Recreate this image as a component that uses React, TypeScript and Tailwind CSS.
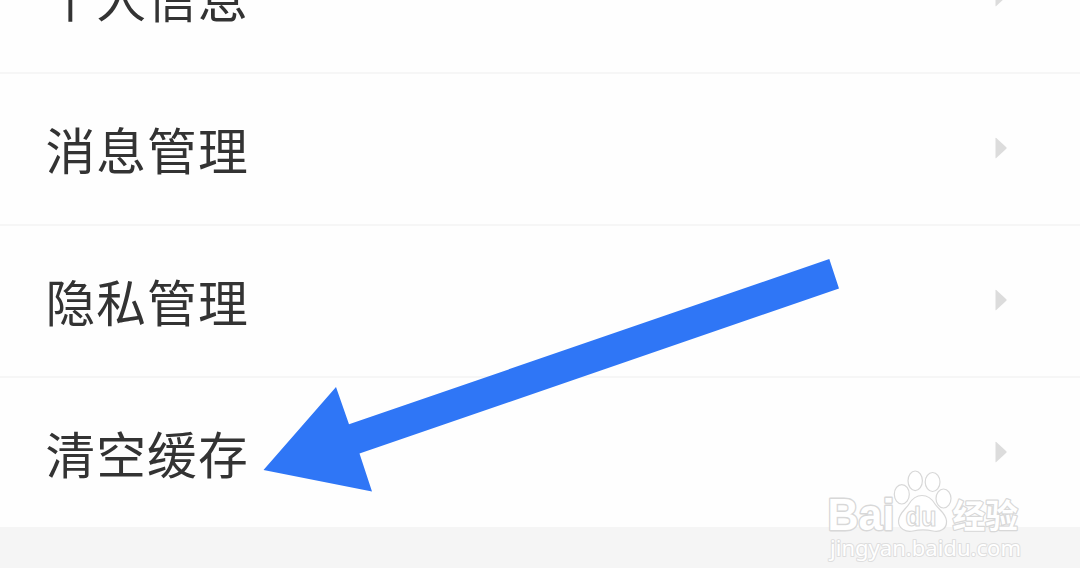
const items = ["个人信息", "消息管理", "隐私管理", "清空缓存"];

function Caret() {
  return (
    <svg viewBox="0 0 12 22" className="mb-0.5 h-[22px] w-3 fill-[#dcdcdc]">
      <path d="M0.5 1.2 Q0.5 0.3 1.3 1 L11.3 10.3 Q12 11 11.3 11.7 L1.3 21 Q0.5 21.7 0.5 20.8 Z" />
    </svg>
  );
}

function Row({ label }: { label: string }) {
  return (
    <li className="flex h-[152px] items-center justify-between border-b-2 border-[#f6f6f6] pr-[73px] pl-[45.5px] last:border-transparent">
      <span className="mb-[3px] text-[49.8px] leading-[72px] tracking-[1px] text-[#333]">{label}</span>
      <Caret />
    </li>
  );
}

function Arrow() {
  return (
    <svg viewBox="0 0 1080 586" className="pointer-events-none absolute inset-0 h-[586px] w-[1080px]">
      <path d="M263.5 470 L336 387 L349 424.3 L829.3 259 L839 288.5 L359.5 453.5 L372 491.5 Z" fill="#2f76f6" />
    </svg>
  );
}

function Watermark() {
  return (
    <svg
      viewBox="0 0 230 126"
      className="pointer-events-none absolute top-[460px] left-[810px] h-[126px] w-[230px]"
      fill="#fff"
      stroke="#d8d8d8"
      strokeLinejoin="round"
    >
      <text
        x="17.5"
        y="70"
        fontSize="44"
        fontWeight="700"
        fontFamily="Liberation Sans, sans-serif"
        textLength="67"
        lengthAdjust="spacingAndGlyphs"
        strokeWidth="2.8"
        paintOrder="stroke"
      >
        Bai
      </text>
      <g strokeWidth="1.2">
        <ellipse cx="91.8" cy="34.3" rx="7.5" ry="9.7" />
        <ellipse cx="105.2" cy="20.8" rx="7.2" ry="9.8" />
        <ellipse cx="122.6" cy="22" rx="7.4" ry="9.5" />
        <ellipse cx="133.5" cy="38.5" rx="7.5" ry="9.5" />
        <path d="M112 35.5 C118 35.5 122 39 125 44 C128 49 136 53 136.5 61 C137 69 130 72.5 123 71 C116 69.5 110 69.5 103 71 C96 72.5 88.5 69 88.5 61 C89 53 96 49 99 44 C102 39 106 35.5 112 35.5 Z" />
      </g>
      <text
        x="95.5"
        y="65.5"
        fontSize="27"
        fontWeight="700"
        fontFamily="Liberation Sans, sans-serif"
        textLength="31"
        lengthAdjust="spacingAndGlyphs"
        strokeWidth="1.2"
      >
        du
      </text>
      <text
        x="142.5"
        y="67.5"
        fontSize="33"
        fontWeight="700"
        fontFamily="Noto Sans CJK SC, sans-serif"
        textLength="65.5"
        lengthAdjust="spacingAndGlyphs"
        strokeWidth="2.4"
        paintOrder="stroke"
      >
        经验
      </text>
      <text
        x="20"
        y="96"
        fontSize="22"
        fontFamily="Noto Sans, sans-serif"
        textLength="191"
        lengthAdjust="spacingAndGlyphs"
        stroke="#dedede"
        strokeWidth="2"
        paintOrder="stroke"
      >
        jingyan.baidu.com
      </text>
    </svg>
  );
}

export default function App() {
  return (
    <div className="relative h-[586px] w-[1080px] overflow-hidden bg-white font-['Noto_Sans_CJK_SC',sans-serif]">
      <ul className="-mt-[78px] flex flex-col bg-[#fefefe]">
        {items.map((label) => (
          <Row key={label} label={label} />
        ))}
      </ul>
      <div className="-mt-[3px] h-[41px] bg-[#f5f5f5]" />
      <Arrow />
      <Watermark />
    </div>
  );
}
